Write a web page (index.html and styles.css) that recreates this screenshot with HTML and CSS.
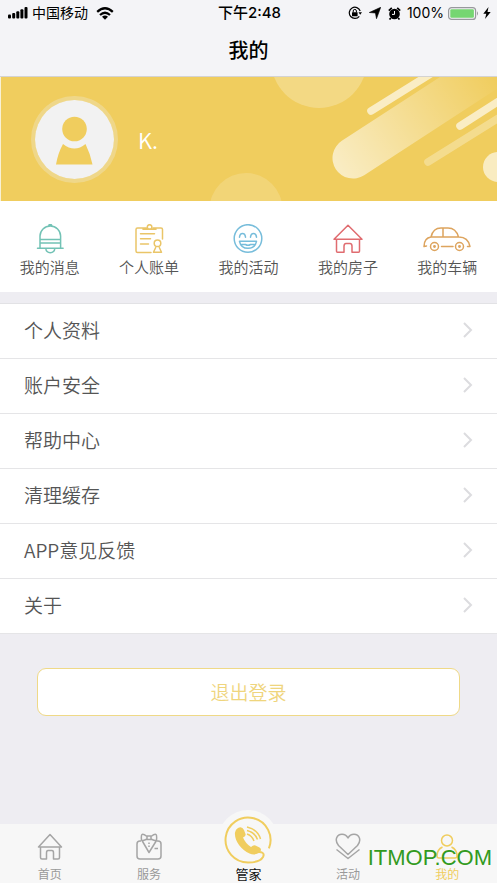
FILE: index.html
```html
<!DOCTYPE html>
<html lang="zh-CN">
<head>
<meta charset="utf-8">
<meta name="viewport" content="width=device-width, initial-scale=1">
<title>我的</title>
<link rel="stylesheet" href="styles.css">
</head>
<body>
<header class="header">
  <div class="status">
    <div class="status-side">
      <svg width="20" height="12" viewBox="0 0 20 12" aria-hidden="true"><rect x="0" y="7.500" width="3" height="4" rx="1"/><rect x="4.200" y="6" width="3" height="5.500" rx="1"/><rect x="8.300" y="4.300" width="3" height="7.200" rx="1"/><rect x="12.400" y="2.300" width="3" height="9.200" rx="1"/><rect x="16.500" y="0" width="3" height="11.500" rx="1"/></svg>
      <span>中国移动</span>
      <svg class="wifi" width="18" height="13" viewBox="0 0 18 13" aria-hidden="true"><path d="M1.200 4.800Q9-2.200 16.800 4.800M4 8Q9 3.600 14 8" fill="none" stroke="#000" stroke-width="2.300"/><path d="M6 9.800Q9 7.300 12 9.800L9 12.800Z"/></svg>
    </div>
    <time class="clock">下午2:48</time>
    <div class="status-side status-end">
      <div class="indicators">
        <svg width="14" height="14" viewBox="0 0 14 14" aria-hidden="true"><path d="M11.300 10.300A5.600 5.600 0 1 1 12.200 5" fill="none" stroke="#000" stroke-width="1.200"/><path d="M10.500 6.200h3.500l-1.800 2.600z"/><rect x="4" y="6.200" width="5.600" height="4" rx=".5"/><path d="M5.200 6.500V5a1.600 1.600 0 0 1 3.200 0v1.500" fill="none" stroke="#000"/></svg>
        <svg width="12" height="12" viewBox="0 0 12 12" aria-hidden="true"><path d="M11.700.3 7.500 11.700 6.400 6 .3 5.500Z" stroke="#000" stroke-width=".6"/></svg>
        <svg width="13" height="13" viewBox="0 0 13 13" aria-hidden="true"><circle cx="6.500" cy="7" r="5.300"/><path d="M.8 3.700 3.800.9M12.200 3.700 9.200.9M2.800 11 1.500 12.500M10.200 11l1.300 1.500" stroke="#000" stroke-width="1.700"/><path d="M6.500 4v3.400H4" fill="none" stroke="#fff"/></svg>
      </div>
      <span>100%</span>
      <svg width="31" height="13" viewBox="0 0 31 13" aria-hidden="true"><rect x=".6" y=".6" width="27" height="11.800" rx="3" fill="none" stroke="#98999d" stroke-width="1.200"/><rect x="2.300" y="2.300" width="23.600" height="8.400" rx="1.300" fill="#76d672"/><path d="M29 4.300q2 2.200 0 4.400z" fill="#98999d"/></svg>
      <svg width="8" height="12" viewBox="0 0 8 12" aria-hidden="true"><path d="M5.500 0 .3 6.700h3L2 12l5.700-7H4.500Z"/></svg>
    </div>
  </div>
  <h1 class="title">我的</h1>
</header>

<main>
  <section class="banner">
    <svg class="banner-art" viewBox="0 0 497 124" preserveAspectRatio="xMidYMid slice" aria-hidden="true">
      <defs><linearGradient id="beam" gradientUnits="userSpaceOnUse" x1="340" y1="90" x2="490" y2="-8"><stop offset="0" stop-color="#fff" stop-opacity=".62"/><stop offset="1" stop-color="#fff" stop-opacity="0"/></linearGradient></defs>
      <g fill="#fff"><circle cx="319" cy="-17" r="48" opacity=".24"/><circle cx="246" cy="132.500" r="36.500" opacity=".16"/><circle cx="498" cy="90" r="15" opacity=".62"/></g>
      <g fill="none" stroke="#fff" stroke-width="7.600" stroke-linecap="round"><path d="M353 81 533-36" stroke="url(#beam)" stroke-width="41"/><path d="M371 34 440-9" opacity=".64"/><path d="M460 49 510 17" opacity=".64"/><path d="M428 85 510 34" opacity=".3"/></g>
    </svg>
    <div class="avatar">
      <svg viewBox="0 0 79 79" fill="#f0cd5e" role="img" aria-label="头像"><circle cx="39.500" cy="29" r="12.300"/><path d="M28 44Q23 53 21 64.500H57.500Q55 53 50.500 44Q39.500 53 28 44Z"/></svg>
    </div>
    <p class="name">K.</p>
  </section>

  <nav class="quick" aria-label="快捷入口">
    <a href="#messages">
      <svg class="teal" width="48" height="30" viewBox="0 0 48 30"><path d="M14 24V12a10.300 10 0 0 1 20.600 0v12M14 15.500h20.600M14 19h20.600M11.500 24.200h25.600M19.800 24.500c.5 5.500 8.500 5.500 9 0M22.800 1.900a1.500 1.500 0 0 1 3 0"/></svg>
      <span>我的消息</span>
    </a>
    <a href="#bills">
      <svg class="gold" width="48" height="30" viewBox="0 0 48 30"><path d="M21.500 4H12.500q-1.500 0-1.500 1.500V27q0 1.500 1.500 1.500H26M28 4h8q1.500 0 1.500 1.500V15M18 5.300h13M15.500 9.800h14M15.500 14.800h10M15.500 20h8"/><circle cx="24.600" cy="3" r="2.300"/><circle cx="32.500" cy="19.300" r="3.300"/><path d="M30.700 23.500 28.500 28.300h8l-2.200-4.800"/></svg>
      <span>个人账单</span>
    </a>
    <a href="#activities">
      <svg class="blue" width="48" height="30" viewBox="0 0 48 30"><circle cx="24" cy="14.500" r="13.800"/><path d="M15.500 13.200q.4-3.800 3-3.800t3 3.800M26.500 13.200q.4-3.800 3-3.800t3 3.800M15.500 17.300h17q-1.400 7-8.500 7t-8.500-7ZM17.500 20.500h4q2.500 1.500 5 0h4"/></svg>
      <span>我的活动</span>
    </a>
    <a href="#house">
      <svg class="red" width="48" height="30" viewBox="0 0 48 30"><path d="M10 15.300 24 1.200 38 15.300ZM12.500 15.500v11.700q0 1 1 1H20v-6q0-2.800 2-2.800h4q2 0 2 2.800v6h6.500q1 0 1-1V15.500"/></svg>
      <span>我的房子</span>
    </a>
    <a href="#car">
      <svg class="orange" width="48" height="30" viewBox="0 0 48 30"><path d="M8 13Q10 4 18 4h7q8 0 10.500 9ZM20 4v9M3.500 22 1 22.500Q1 14 8 13H36q9 0 11 9.500h-2.500M18.500 22.500H30"/><circle cx="11.500" cy="22.500" r="4"/><circle cx="36.500" cy="22.500" r="4"/><circle cx="11.500" cy="22.500" r=".7"/><circle cx="36.500" cy="22.500" r=".7"/></svg>
      <span>我的车辆</span>
    </a>
  </nav>

  <ul class="list">
    <li><a href="#profile">个人资料<svg class="arrow" viewBox="0 0 10 16"><path d="M1 1l7 7-7 7"/></svg></a></li>
    <li><a href="#security">账户安全<svg class="arrow" viewBox="0 0 10 16"><path d="M1 1l7 7-7 7"/></svg></a></li>
    <li><a href="#help">帮助中心<svg class="arrow" viewBox="0 0 10 16"><path d="M1 1l7 7-7 7"/></svg></a></li>
    <li><a href="#cache">清理缓存<svg class="arrow" viewBox="0 0 10 16"><path d="M1 1l7 7-7 7"/></svg></a></li>
    <li><a href="#feedback">APP意见反馈<svg class="arrow" viewBox="0 0 10 16"><path d="M1 1l7 7-7 7"/></svg></a></li>
    <li><a href="#about">关于<svg class="arrow" viewBox="0 0 10 16"><path d="M1 1l7 7-7 7"/></svg></a></li>
  </ul>

  <div class="actions"><button class="logout" type="button">退出登录</button></div>
</main>

<nav class="tabs" aria-label="主导航">
  <a href="#home">
    <svg width="26" height="28" viewBox="0 0 26 28"><path d="M1.500 14 13 1.500 24.500 14ZM3.500 14v10.500q0 1.500 1.500 1.500h4.500v-6q0-2.500 1.500-2.500h4q1.500 0 1.500 2.500v6H21q1.500 0 1.500-1.500V14"/></svg>
    <span>首页</span>
  </a>
  <a href="#service">
    <svg width="26" height="28" viewBox="0 0 26 28"><path d="M5 8H4Q1 8 1 11V23q0 3 3 3H22q3 0 3-3V11q0-3-3-3H21M6 7.500 13 19.500 20.500 7.500M11 3.500Q7 .5 6 1.500T5.500 7q.5 1.500 5.500-1M15 3.500q4-3 5-2T20.500 7q-.5 1.500-5.500-1M11 3h4v3.500h-4ZM13 9.500v1.500M13 12.500v1.500M18.500 15.500H22"/></svg>
    <span>服务</span>
  </a>
  <a class="steward" href="#steward">
    <svg width="48" height="48" viewBox="0 0 48 48"><path d="M44.900 32.400A22.500 22.500 0 1 0 24 46.500Q36 46.500 39 41c2-4-1-5.800-7.500-4.500" stroke-width="2"/><path d="M14 12q4-2 6 2l1.500 4q.7 2-2.500 3.500 2.500 6 8 9.500 2.500-2.500 4.500-1.500l4 2q3 2 0 4.500-4 4-10 1.500C17 34 10 24 11 16.500q.5-3.500 3-4.500Z" fill="#f0cd5e" stroke="none"/><path d="M23 18q5 1.500 7 7M23 14.500q8 2 10.500 9M23 11q11 2.500 13.500 12" stroke-width="1.500"/></svg>
    <span>管家</span>
  </a>
  <a href="#events">
    <svg width="26" height="28" viewBox="0 0 26 28"><path d="M13 21.500 3.500 12.500C-1 7 2 1.200 7 1.200q4 0 6 3.800 2-3.800 6-3.800c5 0 8 5.800 3.500 11.300ZM1.500 16.500 13 25.500 24.500 16.500"/></svg>
    <span>活动</span>
  </a>
  <a class="current" href="#mine" aria-current="page">
    <svg width="26" height="28" viewBox="0 0 26 28"><circle cx="13" cy="7.500" r="5.500"/><path d="M8.500 14Q3 16.500 3 23q0 2 2 2H21q2 0 2-2 0-6.500-5.500-9"/></svg>
    <span>我的</span>
  </a>
  <span class="watermark">ITMOP.COM</span>
</nav>
</body>
</html>
```

FILE: styles.css
```css
* { box-sizing: border-box; }

body {
  margin: 0;
  min-height: 100vh;
  display: flex;
  flex-direction: column;
  background: #eeedf2;
  color: #555;
  font-family: "Noto Sans CJK SC", sans-serif;
  text-autospace: no-autospace;
}

a { color: inherit; text-decoration: none; }
svg { display: block; flex: none; }

.header {
  background: #f4f4f7;
  border-bottom: 1px solid #d4d3d2;
  color: #000;
}

.status {
  display: grid;
  grid-template-columns: 1fr auto 1fr;
  align-items: center;
  height: 26px;
  padding: 0 6px 0 8px;
  font: 14px/20px Inter, "Noto Sans CJK SC", sans-serif;
}

.status-side { display: flex; align-items: center; gap: 4px; }
.status-end { justify-content: flex-end; }
.indicators { display: flex; align-items: center; gap: 7px; margin-right: 2px; }
.wifi { margin-left: 4px; }
.clock { font-size: 15px; font-weight: 500; }

.title {
  margin: 0;
  padding-bottom: 2px;
  font-size: 20px;
  font-weight: 500;
  line-height: 48px;
  text-align: center;
}

.banner {
  position: relative;
  display: flex;
  align-items: center;
  gap: 20px;
  height: 124px;
  padding-left: 31px;
  background: #f0cd5e;
  box-shadow: inset 1px 0 #f8f1d5;
  overflow: hidden;
}

.banner-art { position: absolute; inset: 0; width: 100%; height: 100%; }

.avatar {
  position: relative;
  width: 87px;
  height: 87px;
  border: 4px solid rgba(240, 240, 240, .3);
  border-radius: 50%;
  background: #f2f2f2;
  background-clip: padding-box;
}

.name { position: relative; margin: 0; color: #fff; font-size: 22px; font-weight: 350; line-height: 32px; }

.quick {
  display: grid;
  grid-template-columns: repeat(5, 1fr);
  padding: 23px 0 14px;
  background: #fff;
}

.quick a {
  display: flex;
  flex-direction: column;
  align-items: center;
  gap: 2px;
  font-size: 15px;
  font-weight: 350;
  line-height: 22px;
}
.quick svg { fill: none; stroke-width: 1.5px; stroke-linecap: round; stroke-linejoin: round; }
.teal { stroke: #72c2b5; }
.gold { stroke: #eac568; }
.blue { stroke: #77bddb; }
.red { stroke: #e06c70; }
.orange { stroke: #dda45e; }

.list { margin: 11px 0 0; padding: 0; list-style: none; background: #fff; border-top: 1px solid #e2e2e5; }
.list li { border-bottom: 1px solid #e5e5e7; }
.list a {
  display: flex;
  align-items: center;
  justify-content: space-between;
  padding: 12px 24px 14px;
  font-size: 19px;
  font-weight: 350;
  line-height: 28px;
}
.arrow { width: 10px; height: 16px; fill: none; stroke: #dcdcdf; stroke-width: 2px; }

.actions { padding: 34px 37px; }

.logout {
  display: block;
  width: 100%;
  padding: 9px;
  border: 1px solid #efd987;
  border-radius: 9px;
  background: #fff;
  color: #efd57d;
  font: 350 19px/28px "Noto Sans CJK SC", sans-serif;
}

.tabs {
  position: relative;
  display: grid;
  grid-template-columns: repeat(5, 1fr);
  margin-top: auto;
  background: #f7f7f7;
}

.tabs a {
  display: flex;
  flex-direction: column;
  align-items: center;
  justify-content: flex-end;
  gap: 4px;
  height: 59px;
  color: #999;
  font-size: 12px;
  line-height: 18px;
}

.tabs svg { fill: none; stroke: #a5a5a5; stroke-width: 1.500px; stroke-linejoin: round; }
.tabs .current { color: #f0cd5e; }
.tabs .current svg, .tabs .steward svg { stroke: #f0cd5e; }

.tabs .steward { position: relative; gap: 1px; color: #111; font-size: 13px; }
.steward::before {
  content: "";
  position: absolute;
  top: -14px;
  width: 60px;
  height: 60px;
  border-radius: 50%;
  background: #f7f7f7;
}
.steward svg, .steward span { position: relative; }

.watermark {
  position: absolute;
  right: 5px;
  bottom: 13px;
  color: #329a20;
  font: 22px/24px "Liberation Sans", sans-serif;
  pointer-events: none;
}
```
